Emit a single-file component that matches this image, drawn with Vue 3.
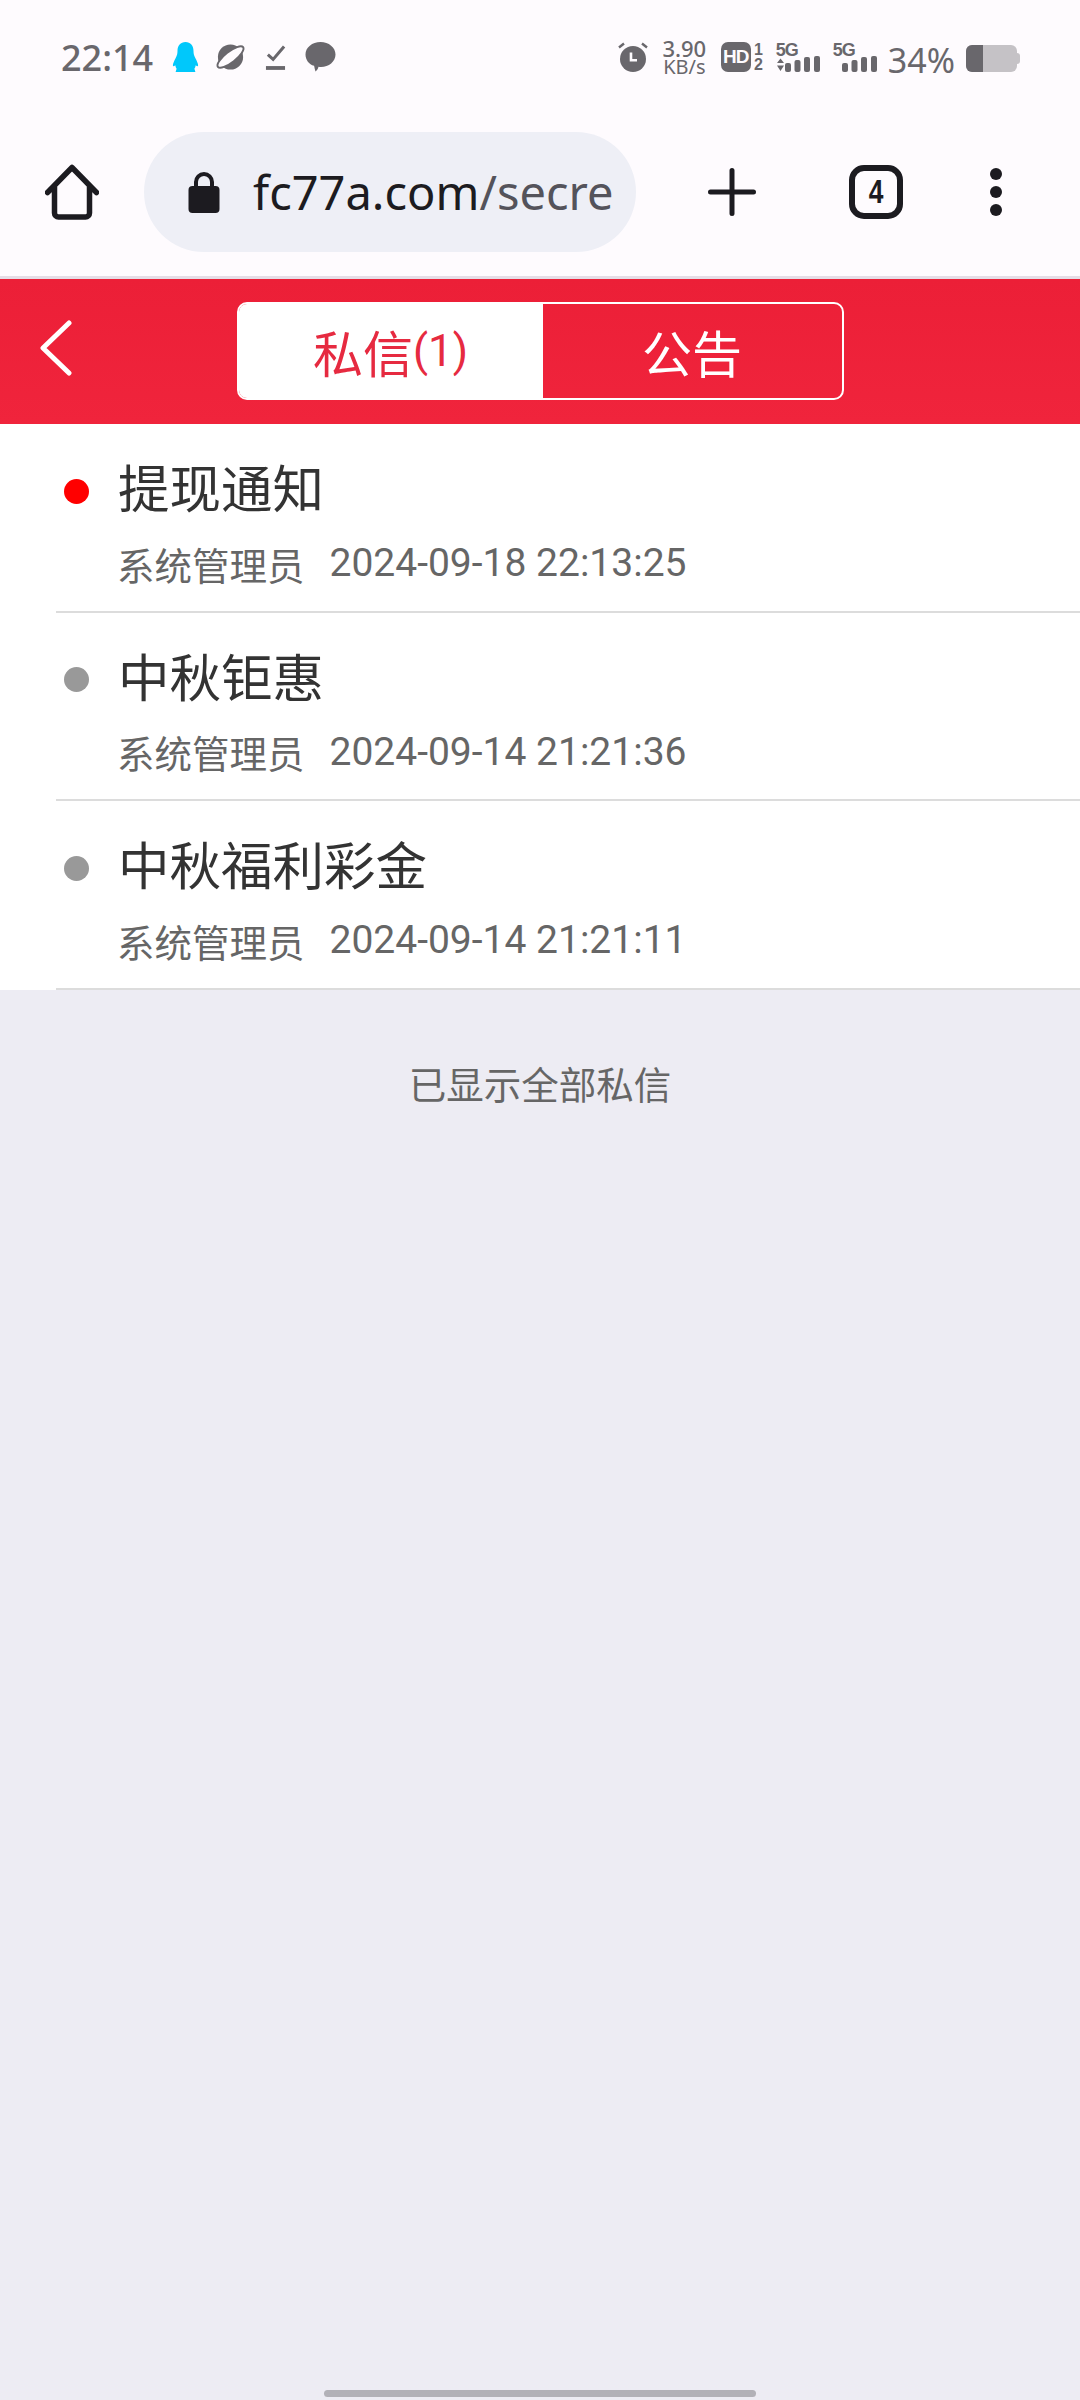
<template>
  <div class="page">
    <div class="status-bar">
      <span class="time">22:14</span>
      <svg class="ic-qq" width="27" height="30" viewBox="0 0 26 30">
        <path fill="#00c8fb" d="M13 0c5 0 8 3.600 8 9 0 3 .6 4.500 1.800 7 1.400 2.800 3 5.800 2.800 7.600-.1 1-1 1-2.400-.4-.2 1.600-.6 2.800-1.300 3.600l1 3.200H3.100l1-3.200c-.7-.8-1.100-2-1.300-3.600-1.400 1.400-2.300 1.400-2.400.4-.2-1.800 1.400-4.800 2.800-7.600C4.400 13.500 5 12 5 9c0-5.400 3-9 8-9z" />
      </svg>
      <svg class="ic-planet" width="31" height="30" viewBox="0 0 32 30">
        <circle cx="16" cy="15" r="13" fill="#69676c" />
        <ellipse cx="16" cy="15" rx="16.500" ry="5.500" transform="rotate(-38 16 15)" fill="#fefbfe" stroke="#69676c" stroke-width="2" />
      </svg>
      <svg class="ic-check" width="21" height="28" viewBox="0 0 22 28">
        <path fill="none" stroke="#69676c" stroke-width="3.200" d="M3 11.500l5.500 5L20 3" />
        <path fill="none" stroke="#69676c" stroke-width="4" d="M1 25.500h20" />
      </svg>
      <svg class="ic-bubble" width="31" height="30" viewBox="0 0 30 30">
        <path fill="#69676c" d="M15 0c8.300 0 15 5.500 15 12.500S23.300 25 15.500 25c-1 0-1.500 0-2.500-.2-.5 2-1.500 3.700-3 4.700-.6-1.800-1-3.800-1.400-5.700C3.500 22.400 0 17.900 0 12.500 0 5.500 6.700 0 15 0z" />
      </svg>
      <div class="status-right">
        <svg class="ic-alarm" width="30" height="30" viewBox="0 0 30 30">
          <circle cx="15" cy="17" r="13" fill="#69676c" />
          <path fill="none" stroke="#fefbfe" stroke-width="2.600" d="M13 10.500v7.700h6" />
          <path fill="none" stroke="#69676c" stroke-width="2.400" d="M1 5.500L6 1.500M29 5.500L24 1.500" />
        </svg>
        <div class="speed">
          <span class="speed-top">3.90</span>
          <span class="speed-unit">KB/s</span>
        </div>
        <div class="hd">HD</div>
        <div class="hd-nums">
          <span>1</span>
          <span>2</span>
        </div>
        <div class="sig sig-first">
          <span class="sig-label">5G</span>
          <svg width="44" height="30" viewBox="0 0 44 30">
            <path fill="#69676c" d="M1 21L4.500 16.500 8 21zM1 23.500h7L4.500 29z" />
            <rect x="9" y="21" width="6" height="9" rx="2" fill="#69676c" />
            <rect x="18.500" y="18" width="6" height="12" rx="2" fill="#69676c" />
            <rect x="28" y="15" width="6" height="15" rx="2" fill="#69676c" />
            <rect x="38" y="14" width="6" height="16" rx="2" fill="#69676c" />
          </svg>
        </div>
        <div class="sig">
          <span class="sig-label">5G</span>
          <svg width="44" height="30" viewBox="0 0 44 30">
            <rect x="9" y="21" width="6" height="9" rx="2" fill="#69676c" />
            <rect x="18.500" y="18" width="6" height="12" rx="2" fill="#69676c" />
            <rect x="28" y="15" width="6" height="15" rx="2" fill="#69676c" />
            <rect x="38" y="14" width="6" height="16" rx="2" fill="#69676c" />
          </svg>
        </div>
        <span class="pct">34%</span>
        <div class="battery">
          <div class="battery-fill" :style="{ width: battery + '%' }"></div>
        </div>
      </div>
    </div>

    <div class="toolbar">
      <svg width="54" height="56" viewBox="0 0 54 56" class="home">
        <path fill="none" stroke="#1c1b20" stroke-width="5.500" stroke-linecap="round" stroke-linejoin="round" d="M2.500 28.500L27 3.500l24.500 25M9.500 23v26a4 4 0 0 0 4 4h27a4 4 0 0 0 4-4V23" />
      </svg>
      <div class="url-pill">
        <svg width="32" height="44" viewBox="0 0 32 44">
          <path fill="none" stroke="#1c1b20" stroke-width="4" d="M8 18v-6a8 8 0 0 1 16 0v6" />
          <rect x="0.500" y="16" width="31" height="27" rx="4" fill="#1c1b20" />
        </svg>
        <span class="url"><span class="host">fc77a.com</span><span class="path">/secre</span></span>
      </div>
      <svg class="plus" width="48" height="48" viewBox="0 0 48 48">
        <path fill="none" stroke="#1c1b20" stroke-width="5" stroke-linecap="round" d="M24 2.500v43M2.500 24h43" />
      </svg>
      <div class="tab-count"><span>4</span></div>
      <div class="more">
        <i></i><i></i><i></i>
      </div>
    </div>

    <header class="head">
      <svg class="back" width="32" height="56" viewBox="0 0 32 56">
        <path fill="none" stroke="#fff" stroke-width="5" stroke-linecap="round" stroke-linejoin="round" d="M29 3L3 28l26 25" />
      </svg>
      <div class="tabs">
        <div class="tab active">私信<span class="count">(1)</span></div>
        <div class="tab">公告</div>
      </div>
    </header>

    <ul class="list">
      <li v-for="m in messages" :key="m.title" class="row">
        <div class="title-line">
          <span class="dot" :class="{ unread: m.unread }"></span>
          <span class="title">{{ m.title }}</span>
        </div>
        <div class="meta">
          <span>系统管理员</span>
          <span class="date">{{ m.date }}</span>
        </div>
      </li>
    </ul>

    <p class="end">已显示全部私信</p>

    <div class="home-bar"></div>
  </div>
</template>

<script setup>
const battery = 34

const messages = [
  { title: '提现通知', date: '2024-09-18 22:13:25', unread: true },
  { title: '中秋钜惠', date: '2024-09-14 21:21:36', unread: false },
  { title: '中秋福利彩金', date: '2024-09-14 21:21:11', unread: false }
]
</script>

<style>
html,
body {
  margin: 0;
  background: #edecf3;
}
</style>

<style scoped>
.page {
  display: flex;
  flex-direction: column;
  width: 1080px;
  height: 2400px;
  overflow: hidden;
  background: #edecf3;
  font-family: "Roboto", "Noto Sans CJK SC", sans-serif;
}

/* 상태바 */
.status-bar {
  display: flex;
  align-items: center;
  box-sizing: border-box;
  height: 114px;
  padding: 0 60px 0 61px;
  background: #fefbfe;
  color: #69676c;
}

.time {
  width: 92px;
  font-family: "Noto Sans", sans-serif;
  font-size: 36px;
  font-weight: 500;
  white-space: nowrap;
}

.ic-qq {
  margin-left: 19px;
}

.ic-planet {
  margin-left: 16px;
}

.ic-check {
  margin-left: 19px;
}

.ic-bubble {
  margin-left: 19px;
}

.status-right {
  display: flex;
  align-items: center;
  margin-left: auto;
}

.speed {
  display: flex;
  flex-direction: column;
  align-items: center;
  width: 45px;
  margin-left: 14px;
  font-family: "Noto Sans", sans-serif;
}

.speed-top {
  font-size: 22px;
  font-weight: 500;
  line-height: 19px;
}

.speed-unit {
  font-size: 20px;
  line-height: 17px;
}

.hd {
  display: flex;
  align-items: center;
  justify-content: center;
  width: 30px;
  height: 30px;
  margin-left: 14px;
  border-radius: 7px;
  background: #69676c;
  color: #fefbfe;
  font-family: "Liberation Sans", sans-serif;
  font-size: 19px;
  font-weight: 700;
  letter-spacing: -1px;
}

.hd-nums {
  display: flex;
  flex-direction: column;
  align-items: center;
  width: 11px;
  margin-left: 2px;
  font-family: "Liberation Sans", sans-serif;
  font-size: 16px;
  font-weight: 700;
  line-height: 15px;
}

.sig {
  position: relative;
  width: 44px;
  height: 30px;
  margin-left: 13px;
}

.sig-first {
  margin-left: 12px;
}

.sig svg {
  display: block;
}

.sig-label {
  position: absolute;
  top: -1px;
  left: 0;
  font-family: "Liberation Sans", sans-serif;
  font-size: 18px;
  font-weight: 700;
  line-height: 18px;
  letter-spacing: -1px;
}

.pct {
  margin-top: 5px;
  margin-left: 11px;
  font-family: "Noto Sans", sans-serif;
  font-size: 34px;
  line-height: 36px;
}

.battery {
  position: relative;
  width: 51px;
  height: 27px;
  margin-top: 2px;
  margin-left: 11px;
  margin-right: 3px;
  border-radius: 6px;
  background: #c5c2c6;
}

.battery::after {
  content: "";
  position: absolute;
  top: 8px;
  right: -3px;
  width: 3px;
  height: 11px;
  border-radius: 0 3px 3px 0;
  background: #c5c2c6;
}

.battery-fill {
  height: 100%;
  border-radius: 6px 0 0 6px;
  background: #69676c;
}

/* 브라우저 툴바 */
.toolbar {
  display: flex;
  align-items: center;
  box-sizing: border-box;
  height: 165px;
  padding: 0 0 6px 45px;
  border-bottom: 3px solid #e5dde6;
  background: #fefbfe;
}

.home {
  flex-shrink: 0;
}

.url-pill {
  display: flex;
  align-items: center;
  box-sizing: border-box;
  width: 492px;
  height: 120px;
  margin-left: 45px;
  padding-left: 44px;
  border-radius: 60px;
  background: #eeeff6;
  overflow: hidden;
}

.url {
  margin-left: 33px;
  font-family: "Noto Sans", sans-serif;
  font-size: 47px;
  white-space: nowrap;
}

.host {
  color: #1c1b20;
}

.path {
  color: #54535b;
}

.plus {
  margin-left: 72px;
  flex-shrink: 0;
}

.tab-count {
  display: flex;
  align-items: center;
  justify-content: center;
  box-sizing: border-box;
  width: 54px;
  height: 54px;
  margin-left: 93px;
  border: 6px solid #1c1b20;
  border-radius: 15px;
  color: #1c1b20;
  font-family: "Liberation Sans", sans-serif;
  font-size: 33px;
  font-weight: 700;
  flex-shrink: 0;
}

.tab-count span {
  transform: scaleX(0.8);
}

.more {
  display: flex;
  flex-direction: column;
  gap: 6px;
  margin-left: 87px;
}

.more i {
  display: block;
  width: 12px;
  height: 12px;
  border-radius: 50%;
  background: #1c1b20;
}

/* 상단 헤더 */
.head {
  position: relative;
  display: flex;
  align-items: center;
  justify-content: center;
  height: 145px;
  background: linear-gradient(#ec1f37, #f0243c);
}

.back {
  position: absolute;
  left: 40px;
  top: 41px;
}

.tabs {
  display: flex;
  box-sizing: border-box;
  width: 607px;
  height: 98px;
  margin-top: -2px;
  border: 2px solid #fff;
  border-radius: 10px;
  overflow: hidden;
}

.tab {
  display: flex;
  flex: 1;
  align-items: center;
  justify-content: center;
  color: #fff;
  font-size: 50px;
}

.tab.active {
  flex: 0 0 304px;
  background: #fff;
  color: #e62a40;
}

.count {
  font-size: 44px;
}

/* 목록 */
.list {
  margin: 0;
  padding: 0;
  background: #fff;
  list-style: none;
}

.row {
  box-sizing: border-box;
  height: 188.5px;
  margin-left: 56px;
  padding-top: 31px;
  border-bottom: 2px solid #dcdcdc;
}

.title-line {
  display: flex;
  align-items: center;
  height: 72px;
}

.dot {
  width: 25px;
  height: 25px;
  margin-left: 8px;
  border-radius: 50%;
  background: #999;
}

.dot.unread {
  background: #f00;
}

.title {
  margin-left: 29px;
  color: #333;
  font-size: 51.500px;
  line-height: 72px;
}

.meta {
  display: flex;
  align-items: center;
  height: 54px;
  margin-top: 9px;
  padding-left: 61px;
  color: #666;
  font-size: 37.500px;
}

.date {
  margin-left: 25px;
  font-size: 39px;
}

.end {
  margin: 69px 0 0;
  color: #666;
  font-size: 37.500px;
  line-height: 54px;
  text-align: center;
}

.home-bar {
  width: 432px;
  height: 7px;
  margin: auto auto 3px;
  border-radius: 4px;
  background: #b2b1b7;
}
</style>
